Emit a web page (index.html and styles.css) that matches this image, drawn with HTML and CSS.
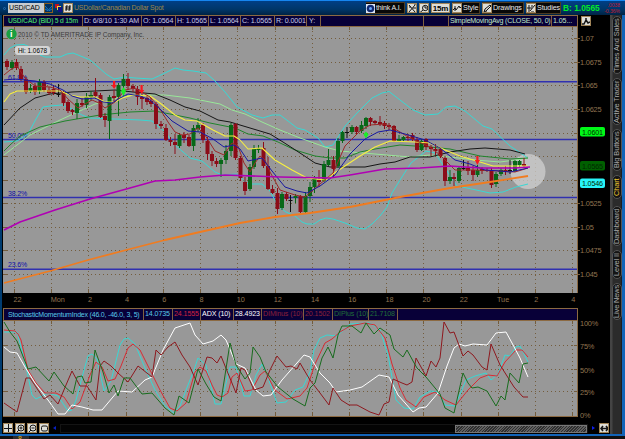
FILE: index.html
```
<!DOCTYPE html>
<html lang="en">
<head>
<meta charset="utf-8">
<title>USD/CAD chart</title>
<link rel="stylesheet" href="styles.css">
</head>
<body>
<div class="window">
  <header class="titlebar">
    <span class="bullet"></span>
    <span class="symbol">USD/CAD</span>
    <span class="drop"><svg width="7" height="5" viewBox="0 0 7 5"><path d="M0 0l3.500 4L7 0M0 3l3.500 2L7 3"/></svg></span>
    <svg class="link" width="8" height="9" viewBox="0 0 8 9"><path fill="#c01020" d="M1 0h4v4H1z"/><path fill="#f0d040" d="M3 2h4v4H3z"/><path fill="#101080" d="M4 3h4v5H4z"/></svg>
    <span class="btn sq"><svg width="8" height="8" viewBox="0 0 8 8"><path d="M3 1L2 7M6 1L5 7M1 3h6M1 5h6"/></svg></span>
    <span class="name">USDollar/Canadian Dollar Spot</span>
    <div class="tools">
      <span class="tool think"><svg class="eye" width="9" height="9" viewBox="0 0 9 9"><path fill="#dce6f4" d="M0 0h9v9H0z"/><circle cx="4.500" cy="4.500" r="3.800" fill="#102870"/><circle cx="4.500" cy="4.500" r="1.500" fill="#68a8ff"/></svg>think A.I.</span>
      <span class="btn"><svg width="9" height="9" viewBox="0 0 9 9"><path d="M1 1l6 7M7 1L1 8M5 4h3M6 0h3M1 3h2"/></svg></span>
      <span class="btn"><svg width="9" height="9" viewBox="0 0 9 9"><circle cx="5.200" cy="4" r="2.700"/><path d="M3 6L0 8.500M5 2v2h2"/></svg></span>
      <span class="btn period">15m</span>
      <span class="tool style"><span class="btn"><svg width="9" height="9" viewBox="0 0 9 9"><path d="M0 6l2-2 1 2 3-4 1 2 2-2M2 2v5"/></svg></span>Style</span>
      <span class="tool draw"><span class="btn"><svg width="9" height="9" viewBox="0 0 9 9"><path d="M1 8l1-3 5-4 1 1-5 5zM1 8h3"/></svg></span>Drawings</span>
      <span class="tool study"><span class="btn"><svg width="9" height="9" viewBox="0 0 9 9"><path d="M2 1v7M0 4h5M3 7l5-6M4 2h2M4 8h3"/></svg></span>Studies</span>
    </div>
    <span class="bid">B: 1.0565</span>
    <span class="change"><b>.0038</b><b>-0.36%</b></span>
  </header>

  <div class="body">
    <main class="main">
      <div class="info top">
        <b class="pair">USD/CAD (BID) 5 d 15m</b><span class="c1">D: 6/8/10 1:30 AM</span><span class="c2">O: 1.0564</span><span class="c3">H: 1.0565</span><span class="c4">L: 1.0564</span><span class="c5">C: 1.0565</span><span class="c6">R: 0.0001</span><span class="c7">Y:</span><span class="c8"></span><span class="c9"></span><span class="sma">SimpleMovingAvg (CLOSE, 50, 0)</span><span class="smav">1.05...</span>
      </div>
      <div class="plotrow">
        <div class="plot">
          <svg id="price" width="574" height="266" viewBox="3 27 574 266">
            <g class="grid" id="gridMain"></g>
            <g class="fib"><path d="M3 81.800h574M3 139.500h574M3 197.600h574M3 269.300h574"/></g>
            <g class="fibtext"><text x="8" y="80">61.8%</text><text x="8" y="137.500">50.0%</text><text x="8" y="195.500">38.2%</text><text x="8" y="267">23.6%</text></g>
            <circle cx="528" cy="171.500" r="17.500" fill="#d0d0d0" opacity=".75"/>
            <g class="lines">
              <polyline class="cyan" points="4,55 10,48 16,45 24,44.500 35,49 40,55 45,57 60,57 67,54 73,53 83,57 90,60 97,66 106,74 114,79 125,77 135,78 152,79 163,74 175,68 183,70 193,71 206,73 214,80 225,92 237,107 252,115 263,118 272,115 280,115 288,121 297,128 305,130 318,138 325,147 333,145 345,126 358,112 372,98 382,93 389,91.500 400,100 413,110 425,115 438,114 446,107 455,106 465,111 483,126 492,129 510,146 528,158"/>
              <polyline class="cyan" points="4,142 17,141 28,134 36,119 43,107 50,106 62,105 72,109 82,115 90,118 140,120 152,121 165,132 175,145 190,158 202,161 215,172 222,175 237,174 248,184 262,184 270,191 278,206 286,212 295,216 302,222 307,224 314,224 320,220 326,218 333,219 345,223 357,228 365,229 372,224 380,216 387,207 392,193 400,180 411,163 426,151 435,153 445,168 457,186 467,188 490,193 503,192 516,187 528,184"/>
              <polyline class="lime" points="4,155 30,135 60,120 82,110 95,104 112,100 120,97 135,95 165,95 190,98 200,100 220,104 232,110 245,114 262,122 280,130 300,138 325,147 340,151 375,154 410,157 430,155 450,157 475,160 500,162 515,160 528,158"/>
              <polyline class="green" points="4,151 10,145 20,136 40,127 65,121 100,115 130,112 155,111 175,115 190,118 210,123 235,128 248,134 263,136 278,142 295,150 315,156 330,158 345,158 360,152 375,149 400,145 430,147 450,149 480,156 510,159 528,158"/>
              <polyline class="black" points="4,125 20,108 35,98 50,94 72,92 95,91 115,90 133,92 155,94 170,100 185,107 200,111 218,120 230,122 250,128 270,134 283,142 300,153 315,163 330,167 365,167 380,164 395,162 410,157 430,157 450,152 470,149 485,148 510,150 525,154"/>
            </g>
            <g id="candles"></g>
            <g class="lines">
              <polyline class="yellow" points="4,102 10,94 17,91 40,91 60,91 70,95 80,97 95,97 105,102 115,102 122,98 133,95 150,96 160,103 175,115 185,120 197,121 213,130 225,136 234,136 240,140 248,149 262,148 275,160 292,170 307,178 325,180 333,174 345,166 360,156 375,147 390,141 415,142 430,143 445,150 460,156 480,162 493,166 528,166"/>
              <polyline class="maroon" points="4,75 10,70 17,66 25,78 35,86 50,87 60,90 68,99 78,108 92,100 99,103 105,108 115,102 125,90 135,88 150,97 158,106 168,122 175,132 182,135 190,134 198,128 205,135 215,151 224,155 232,143 238,146 244,163 250,172 255,163 260,156 265,160 270,172 280,190 295,195 305,197 320,184 333,173 345,146 360,131 370,125 385,124 395,129 410,138 430,147 440,155 455,170 475,170 500,171 515,172 528,168"/>
              <polyline class="blue" points="4,80 15,79 25,80 35,81 50,84 63,90 72,96 82,99 95,98 103,102 112,103 120,98 128,94 140,96 150,100 160,109 172,121 188,131 200,132 213,139 224,147 234,145 240,149 248,161 262,158 272,171 285,187 297,191 307,193 320,186 335,175 350,154 365,139 378,132 390,130 405,134 425,140 440,148 455,160 470,164 485,170 500,171 510,172 528,168"/>
              <polyline class="magenta" points="4,230 20,222 55,210 90,199 130,188 155,181 175,180 200,177 225,175 280,177 330,178 350,175 385,169 420,168 450,166 480,168 515,168 530,167"/>
              <polyline class="orange" points="4,283 50,271 88,260 130,249 165,240 200,232 240,223 275,217 310,213 350,207 400,197 450,188 490,182 528,176"/>
            </g>
            <path class="sell" d="M113 81h2.200v4h1.500l-2.600 4-2.600-4h1.500zM140.500 85h2.200v5h1.500l-2.600 4-2.600-4h1.500zM476.300 156h2.200v4h1.500l-2.600 5-2.600-5h1.500z"/>
            <path class="buy" d="M123.500 87l2.500 4-2.500 5-2.500-5zM366 131.500l2.500 3-2.500 4-2.500-4z"/>
            <circle cx="11.500" cy="34" r="5.200" fill="#18a040"/><text class="mark" x="10" y="37.300">i</text>
            <text class="copy" x="18" y="37.300" textLength="126" lengthAdjust="spacingAndGlyphs">2010 © TD AMERITRADE IP Company, Inc.</text>
            <rect x="15" y="46" width="35" height="9" rx="3" fill="#d4d4d4"/><text class="hi" x="18" y="53.300" textLength="29" lengthAdjust="spacingAndGlyphs">Hi: 1.0678</text>
          </svg>
        </div>
        <svg class="axis" width="33" height="266" viewBox="577 27 33 266">
          <g id="priceLabels"></g>
          <rect x="579" y="127" width="25" height="9.500" rx="2" fill="#00f818"/><text class="tag" x="581" y="134.700">1.0601</text>
          <rect x="579" y="161" width="25" height="9.500" rx="2" fill="#006000"/><text class="tag" x="581" y="168.700">1.0565</text>
          <rect x="579" y="178.500" width="25" height="9.500" rx="2" fill="#28f4f8"/><text class="tag" x="581" y="186.200">1.0546</text>
        </svg>
      </div>
      <div class="times"><span>22</span><span>Mon</span><span>2</span><span>4</span><span>6</span><span>8</span><span>10</span><span>12</span><span>14</span><span>16</span><span>18</span><span>20</span><span>22</span><span>Tue</span><span>2</span><span>4</span></div>
      <div class="info low">
        <span class="smi">StochasticMomentumIndex (46.0, -46.0, 3, 5)</span><span class="v1">14.0735</span><span class="v2">24.1555</span><span class="v3">ADX (10)</span><span class="v4">28.4923</span><span class="v5">DIMinus (10)</span><span class="v6">20.1502</span><span class="v7">DIPlus (10)</span><span class="v8">21.7108</span>
      </div>
      <div class="plotrow">
        <div class="plot sub">
          <svg width="574" height="95" viewBox="3 321 574 95">
            <g class="grid" id="gridSub"></g>
            <g class="lines">
              <polyline class="cyan" points="4,332 17,332 25,362 32,395 36,399 48,393 58,396 64,405 68,411 72,410 76,400 84,370 88,356 92,354 97,359 104,391 111,381 120,345 124,339 128,338 135,344 145,368 155,390 165,406 174,413 180,406 188,385 194,370 198,358 206,365 215,404 221,404 230,367 236,367 244,396 250,396 256,375 262,364 267,375 277,403 286,402 295,390 303,387 310,372 314,350 320,338 327,335 337,336 350,324 370,323 380,330 388,355 396,400 404,408 413,409 420,397 430,391 438,392 445,405 455,406 466,380 475,376 486,373 491,380 498,374 505,355 510,356 516,347 520,346 528,362"/>
              <polyline class="red" points="4,330 15,331 18,334 21,340 28,370 36,383 45,393 56,393 64,397 72,409 80,402 90,375 96,362 102,367 108,381 115,379 121,366 128,348 133,344 140,350 150,370 160,390 170,408 177,411 186,403 195,372 200,367 206,371 212,385 217,395 222,397 228,393 232,377 237,373 245,391 252,390 260,375 265,371 275,390 287,399 300,396 307,388 315,364 325,343 332,339 340,332 350,326 365,323 375,325 385,338 392,364 400,388 406,400 416,407 424,397 435,392 445,400 456,405 468,390 480,378 488,375 497,376 505,362 516,350 522,350 528,357"/>
              <polyline class="white" points="4,347 10,352 17,353 25,367 35,383 48,400 58,414 65,414 72,405 82,407 93,410 102,410 118,391 132,392 145,380 152,377 163,350 175,328 190,323 195,335 203,344 213,341 221,335 226,340 236,364 245,368 256,390 263,396 271,395 282,380 304,355 310,357 320,373 330,383 336,392 350,390 362,387 379,375 389,377 398,395 413,412 419,408 426,407 438,393 447,366 454,348 459,344 465,346 473,344 487,345 496,333 506,332 512,343 520,358 528,377"/>
              <polyline class="dred" points="4,403 17,412 26,378 30,378 44,399 50,395 58,404 66,385 72,371 80,386 87,386 96,400 100,366 104,361 111,366 118,373 128,382 138,366 152,377 156,350 161,355 168,347 175,342 182,355 190,367 198,385 207,357 212,358 217,363 221,356 236,393 241,368 245,370 254,390 263,387 270,370 277,356 286,367 291,366 297,369 300,363 310,380 320,393 329,405 333,388 341,400 349,405 357,405 370,412 379,415 384,404 389,402 393,379 402,383 407,385 412,382 416,358 426,376 431,361 436,367 440,358 444,322 450,333 454,332 463,356 468,351 473,355 482,367 487,370 491,344 500,365 514,387 523,397 528,397"/>
              <polyline class="dgreen" points="4,322 10,332 17,341 28,369 36,367 49,381 54,372 64,386 73,394 77,377 82,376 85,383 91,382 95,350 103,372 109,393 114,385 118,396 124,378 130,378 142,394 152,393 165,408 174,415 179,396 189,403 198,369 206,384 214,397 221,401 230,343 236,365 245,379 250,373 253,347 260,357 266,372 278,387 293,399 305,406 310,388 315,383 322,358 328,347 333,358 338,335 342,326 352,326 361,333 366,323 374,334 380,328 390,335 394,349 403,357 407,350 413,361 417,368 426,377 440,394 445,408 454,413 463,373 468,383 472,388 478,387 487,391 496,406 501,396 505,400 510,373 519,383 523,364 528,363"/>
            </g>
          </svg>
        </div>
        <svg class="axis" width="33" height="97" viewBox="577 321 33 97"><text x="579" y="326">100%</text><text x="579" y="349">75%</text><text x="579" y="372.500">50%</text><text x="579" y="395">25%</text><text x="579" y="418">0%</text></svg>
      </div>
      <div class="scroll">
        <span class="btn"><svg width="9" height="9" viewBox="0 0 9 9"><path d="M4.500 0v9M0 4.500h9"/></svg></span>
        <span class="btn"><svg width="9" height="9" viewBox="0 0 9 9"><circle cx="5" cy="4" r="3"/><path d="M3 6L0 9M3.500 4h3M5 2.500v3"/></svg></span>
        <span class="btn"><svg width="9" height="9" viewBox="0 0 9 9"><circle cx="5" cy="4" r="3"/><path d="M3 6L0 9M3.500 4h3"/></svg></span>
        <span class="btn"><svg width="9" height="9" viewBox="0 0 9 9"><rect x="1.500" y="2" width="6" height="5" rx="1.500"/></svg></span>
        <span class="arrow left"></span>
        <div class="track"><div class="thumb"></div></div>
        <span class="arrow right"></span>
        <span class="btn"><svg width="9" height="9" viewBox="0 0 9 9"><path d="M1 4.500h7M3 2L1 4.500 3 7M6 2l2 2.500L6 7" stroke-width="1.600"/></svg></span>
      </div>
    </main>
    <nav class="side">
      <span class="t1">Times And Sales</span><span class="t2">Active Trader</span><span class="t3">Big Buttons</span><span class="t4 on">Chart</span><span class="t5">Dashboard</span><span class="t6">Level II</span><span class="t7">Live News</span>
    </nav>
  </div>
  <footer class="foot"><span>8</span></footer>
  <span class="btn corner"><svg width="9" height="9" viewBox="0 0 9 9"><path d="M0 7h2l2-4 2 3 2-1M4 1v2" stroke-width="1.500"/></svg></span>
</div>
<script src="chart.js"></script>
</body>
</html>
```

FILE: chart.js
```
const xs = [14.5, 51.5, 88.500, 126.5, 163.5, 200.5, 237.5, 275.5, 312.5, 349.5, 386.5, 423.5, 461.5, 498.5, 535.5, 572.5];
const ys = [38.5, 62.5, 85.5, 109.5, 133.5, 156.5, 180.5, 203.5, 227.5, 250.5, 274.5];
const subYs = [345.5, 369.5, 391.5];

function grid(id, rows, top, bottom) {
  const lines = xs.map(x => `M${x} ${top}V${bottom}`).join('') + rows.map(y => `M3 ${y}H577`).join('');
  const ticks = xs.map(x => `M${x} ${top}v3M${x} ${bottom}v-4`).join('') + rows.map(y => `M3 ${y}h4M577 ${y}h-3`).join('');
  document.getElementById(id).innerHTML = `<path class="dots" d="${lines}"/><path class="ticks" d="${ticks}"/>`;
}
grid('gridMain', ys, 27, 293);
grid('gridSub', subYs, 321, 416);

const labels = { 38.5: '1.07', 62.5: '1.0675', 85.5: '1.065', 109.5: '1.0625', 203.5: '1.0525', 227.5: '1.05', 250.5: '1.0475', 274.5: '1.045' };
document.getElementById('priceLabels').innerHTML = Object.entries(labels)
  .map(([y, t]) => `<path class="ticks" d="M577 ${y}h2"/><text x="579" y="${+y + 2.8}">${t}</text>`).join('');

// x, wick top, body top, body bottom, wick bottom, colour (r, g or d for doji)
const candles = `7 59 61 67 70 r|12 60 62 68 70 g|16.5 59 62 68 70 r|21 66 69 79 81 r|26 77 79 92 94 r|30.5 84 88 91 93 g|35 83 86 92 95 r|39.5 79 82 91 94 g
44 80 82 90 92 r|49 87 90 93 95 r|53.500 85 89 93 95 r|58.5 84 94 95 97 d|63.5 91 93 103 106 r|68 100 102 111 113 r|72.5 109 110 112 115 r|77 99 103 113 119 g
82 98 103 105 107 r|86.5 93 97 105 108 g|91 91 95 97 101 g|95.5 78 92 96 99 r|100.5 93 95 117 118 r|105 113 116 120 127 r|109.5 95 97 121 139 g|114 90 96 98 102 r
118.5 83 85 97 116 g|123.5 74 79 86 96 g|128 73 79 86 90 r|133 84 86 89 92 r|137.5 86 89 97 105 r|142 94 97 99 109 r|147 95 98 102 105 r|151 97 101 104 107 r
156 102 104 124 129 r|161 121 124 126 129 r|166 124 128 140 141 r|170.5 137 140 142 146 r|175 134 142 145 154 r|179.5 133 135 146 148 g|184 132 135 138 143 r|189 135 137 146 147 r
193.5 125 128 146 151 g|198 118 125 129 132 g|203 123 125 140 143 r|207.5 137 141 154 160 r|212 151 154 161 166 r|216.5 158 161 164 167 r|221 158 160 164 177 g|226 145 151 160 164 g
231 123 125 151 156 g|235.5 123 124 158 160 r|240.5 156 158 178 181 r|245 177 182 191 195 r|250 164 167 189 191 g|254 145 149 167 169 g|258.5 145 148 150 153 g|263.5 142 148 166 168 r
268 157 166 189 190 r|272.5 185 189 193 194 r|277.5 188 193 209 214 r|282 192 194 208 210 g|286.5 192 194 199 201 r|290.5 195 200 201 212 d|295.5 194 196 198 203 g|300.5 195 196 212 213 r
305.5 192 196 212 213 g|310 182 187 196 202 g|314.5 176 178 187 193 g|319 170 180 182 187 r|324 161 164 181 182 g|328.5 149 160 165 166 g|333.5 156 160 169 178 r|338 138 141 166 168 g
342.5 131 132 141 143 g|347 127 132 133 138 d|352 125 127 132 134 g|356.5 126 127 132 134 r|361.5 121 125 131 133 g|366 117 118 126 129 g|370.5 117 118 122 126 r|375 120 121 123 125 r
380 116 122 124 126 r|384.5 121 123 126 129 r|389 123 125 127 130 r|394 125 126 141 142 r|399 135 139 141 142 g|403.5 136 137 140 142 g|408 134 137 138 141 r|412.500 133 135 139 141 r
417 137 140 150 152 r|421.5 139 141 150 151 g|426 138 139 147 150 r|431 145 147 149 156 r|435.5 144 149 151 155 r|440.5 147 149 156 158 r|445 156 158 181 186 r|450 170 177 181 184 g
454 173 177 179 186 r|459 166 168 181 183 g|463.5 160 168 169 170 d|468 161 168 171 175 r|473 166 170 175 181 r|477.5 165 170 175 177 g|482 167 169 171 174 r|487 168 170 171 172 r
491.5 168 171 185 188 r|496 172 174 184 187 g|501 168 170 174 176 g|505.5 166 170 172 175 r|510 160 170 171 174 d|515 160 161 171 172 g|519.5 160 161 165 167 g|524 158 164 166 168 r`;
const colours = { r: '#8c0c18', g: '#086818', d: '#101010' };
document.getElementById('candles').innerHTML = candles.split(/[|\n]/).map(row => {
  const [x, hi, top, bottom, lo, c] = row.split(' ');
  return `<g stroke="${colours[c]}"><path d="M${x} ${hi}V${lo}"/><path stroke-width="4" d="M${x} ${top}V${bottom}"/></g>`;
}).join('');
```

FILE: styles.css
```
* { box-sizing: border-box; }
body { margin: 0; background: #000; font: 7.5px/10px "Liberation Sans", Arial, sans-serif; color: #ddd; }
.window { position: relative; width: 625px; height: 439px; overflow: hidden; background: #000; }
svg { display: block; flex: none; }
.titlebar { display: flex; align-items: center; height: 15px; padding-left: 3px; border-top: 1px solid #1686f0; background: linear-gradient(#003f86, #003668 60%, #002344); white-space: nowrap; }
.titlebar > * { flex: none; }
.bullet { width: 3px; height: 3px; border: 1px solid #2a6cb0; border-radius: 50%; margin-right: 2px; }
.symbol { width: 36px; height: 10px; padding-left: 1px; background: #c8ccd0; color: #000; font-size: 7px; letter-spacing: -.1px; }
.drop { width: 9px; height: 10px; display: grid; place-items: center; border: 1px solid #8a6020; background: #003060; }
.drop path { fill: none; stroke: #1878c0; }
.link { margin: 0 1px; }
.btn { flex: none; display: grid; place-items: center; width: 10px; height: 10px; background: #deded8; border: 1px solid #a08458; overflow: hidden; }
.btn path, .btn circle, .btn rect { fill: none; stroke: #151515; }
.name { margin-left: 1px; width: 292px; color: #9b854c; font-size: 7px; letter-spacing: -.24px; }
.tools { display: flex; gap: 2px; height: 12px; align-items: center; font-size: 7.2px; letter-spacing: -.15px; }
.tool { flex: none; display: flex; align-items: center; gap: 1px; height: 12px; background: #080808; border: 1px solid #4d3b20; border-left: 0; color: #e8e8e8; }
.think { width: 39px; font-size: 7px; }
.period { width: 19px; font-weight: bold; color: #000; font-size: 8px; letter-spacing: -.2px; }
.style { width: 28px; }
.draw { width: 42px; }
.study { width: 35px; }
.bid { margin-left: 2px; width: 39px; color: #00e828; font: bold 8.4px/12px "Liberation Sans", Arial, sans-serif; }
.change { display: flex; flex-direction: column; align-items: flex-end; width: 18px; font-size: 5px; line-height: 6px; color: #c81828; }
.change b { font-weight: normal; }
.body { display: flex; height: 419px; }
.main { width: 610px; padding-left: 3px; background: #000; box-shadow: inset 2px 0 #003c70; }
.info { display: flex; width: 575px; background: #080038; border: 1px solid #8c6a42; color: #c4c8e4; font-size: 7.1px; letter-spacing: -.1px; white-space: nowrap; overflow: hidden; }
.info > * { flex: none; padding-left: 1px; border-right: 1px solid #806040; }
.top { height: 12px; }
.info .pair { width: 79px; padding-left: 4px; color: #38b860; font-size: 6.8px; letter-spacing: -.3px; }
.c1 { width: 59px; } .c2 { width: 34px; } .c3 { width: 33px; } .c4 { width: 32px; } .c5 { width: 34px; } .c6 { width: 32px; } .c7 { width: 14px; padding-left: 2px; }
.c8 { width: 103px; } .c9 { width: 25px; }
.sma { width: 103px; color: #c0e8c8; letter-spacing: -.22px; }
.info .smav { width: 25px; border-right: 0; color: #c0e8c8; }
.plotrow { display: flex; }
.plot { width: 575px; height: 266px; background: #989898; border-right: 1px solid #8c6a42; }
.sub { height: 96px; border-bottom: 1px solid #8c6a42; }
.axis { overflow: visible; }
.axis text { font-size: 7.4px; fill: #927450; letter-spacing: -.2px; }
.axis .tag { fill: #002800; font-size: 7.2px; }
.grid path, .axis path { fill: none; stroke: #745d3d; }
.grid .dots { stroke-dasharray: 1 3; }
.fib path { stroke: #3030b0; stroke-width: 1.5; fill: none; }
.fibtext { fill: #1010a8; font-size: 7px; letter-spacing: -.15px; }
.lines polyline { fill: none; stroke-width: 1; stroke-linejoin: round; }
.lines .cyan { stroke: #38d8d4; } .lines .lime { stroke: #98e898; } .lines .green { stroke: #20842c; } .lines .black { stroke: #151515; }
.lines .yellow { stroke: #f8f040; stroke-width: 1.1; } .lines .maroon { stroke: #9c2828; } .lines .blue { stroke: #1818a0; }
.lines .magenta { stroke: #b000b4; stroke-width: 1.6; } .lines .orange { stroke: #f07c20; stroke-width: 1.8; }
.lines .red { stroke: #d82c34; } .lines .white { stroke: #fff; } .lines .dred { stroke: #8e181e; } .lines .dgreen { stroke: #186c1e; }
.sell { fill: #f81820; } .buy { fill: #18f028; }
.mark { fill: #fff; font-weight: bold; font-size: 9px; }
.copy { fill: #3c3c3c; font-size: 7.2px; } .hi { fill: #000; font-size: 7.2px; }
.times { display: grid; grid-template-columns: repeat(16, 37.2px); height: 15px; padding: 2px 0 0 9.5px; color: #927450; font-size: 7.3px; overflow: hidden; white-space: nowrap; }
.times span { padding-left: 1px; }
.low { height: 13px; line-height: 11px; }
.info .smi { width: 140px; padding-left: 4px; color: #58c8e8; font-size: 7px; letter-spacing: -.2px; }
.v1 { width: 29px; color: #58c8e8; } .v2 { width: 28px; color: #d02040; } .v3 { width: 33px; color: #fff; } .v4 { width: 28px; color: #fff; }
.v5 { width: 42px; color: #8c2038; } .v6 { width: 29px; color: #8c2038; } .v7 { width: 36px; color: #207038; } .v8 { width: 29px; color: #207038; }
.scroll { display: flex; align-items: center; gap: 2px; height: 12px; margin-top: 4px; }
.arrow { width: 0; height: 0; border: 2.5px solid transparent; }
.left { border-right: 3px solid #0820c0; border-left: 0; margin: 0 2px; } .right { border-left: 3px solid #1020e8; border-right: 0; margin: 0 2px; }
.track { flex: 1; height: 9px; background: #040404; border: 1px solid #141414; }
.thumb { margin-left: auto; width: 132px; height: 8px; border: 1px solid #777; background: repeating-linear-gradient(135deg, #303030 0 1px, #606060 1px 2px); }
.scroll .btn:last-child { margin-right: 1px; }
.side { display: flex; flex-direction: column; width: 15px; padding: 1px 1px 0 2px; gap: 4px; background: linear-gradient(90deg, #444 0 2px, #2b2b2b 3px 11px, #111 12px 12.5px, #1264b8 12.5px 14.5px, #001830 15px); }
.side span { flex: none; display: flex; align-items: center; justify-content: center; width: 10px; writing-mode: vertical-rl; transform: rotate(180deg); white-space: nowrap; background: #141414; border: 1px solid #555; border-radius: 5px; color: #aaa; font-size: 7.4px; line-height: 8px; letter-spacing: -.1px; }
.side .on { color: #f0c830; }
.t1 { height: 58px; } .t2 { height: 47px; } .t3 { height: 42px; } .t4 { height: 24px; } .t5 { height: 40px; margin-top: 3px; } .t6 { height: 29px; } .t7 { height: 37px; }
.foot { height: 5px; border-top: 2px solid #1264b8; background: #101010; padding-left: 13px; }
.foot span { display: block; width: 16px; height: 5px; padding-left: 5px; background: #2c2c2c; color: #e0b820; font-size: 7px; line-height: 5px; }
.corner { position: absolute; left: 581px; top: 16px; }
```
